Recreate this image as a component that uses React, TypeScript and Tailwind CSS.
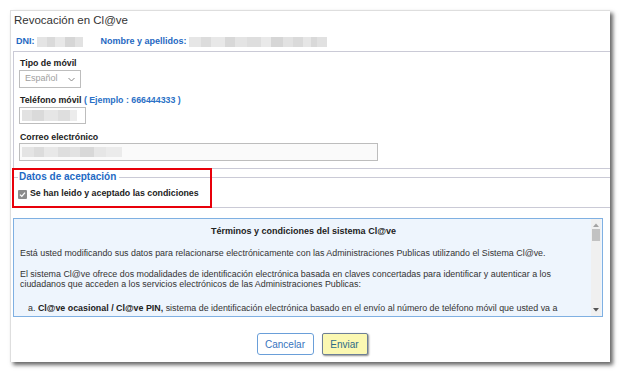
import React from "react";

const Blur = ({ widths }: { widths: [number, string][] }) => (
  <div className="flex h-full">
    {widths.map(([w, c], i) => (
      <div key={i} style={{ width: w, background: c }} className="h-full" />
    ))}
  </div>
);

export default function App() {
  return (
    <div className="w-[621px] h-[373px] bg-white pt-[10px] pl-[10px] font-['Liberation_Sans',Arial,sans-serif]">
      <div className="relative w-[600px] h-[352px] bg-white border-t border-l border-[#dedede] shadow-[3px_3px_4px_rgba(0,0,0,0.6)] flex flex-col">
        {/* Title */}
        <div className="h-[19px] leading-[19px] pl-[3px] text-[11.5px] text-[#333]">Revocación en Cl@ve</div>
        {/* DNI row */}
        <div className="h-[21px] pt-[3px] flex items-center pl-[5px] text-[9px] font-bold text-[#1f68c2]">
          <span>DNI:</span>
          <div className="ml-[2px] h-[10px] w-[46px]">
            <Blur widths={[[10, "#e4e4e4"], [8, "#dadada"], [10, "#e8e8e8"], [10, "#d6d6d6"], [8, "#e2e2e2"]]} />
          </div>
          <span className="ml-[18px]">Nombre y apellidos:</span>
          <div className="ml-[2px] h-[10px] w-[138px]">
            <Blur
              widths={[
                [12, "#e6e6e6"],
                [10, "#dcdcdc"],
                [14, "#e8e8e8"],
                [10, "#d8d8d8"],
                [12, "#e4e4e4"],
                [14, "#dedede"],
                [10, "#e9e9e9"],
                [12, "#d6d6d6"],
                [10, "#e2e2e2"],
                [10, "#dadada"],
                [8, "#e6e6e6"],
                [6, "#d9d9d9"],
                [10, "#e1e1e1"],
              ]}
            />
          </div>
        </div>
        {/* Fieldset 1 */}
        <div className="ml-[2px] h-[118px] border-l border-t border-b border-[#cacad6] pl-[5px] flex flex-col">
          <div className="mt-[5px] h-[12px] leading-[12px] text-[8.8px] font-bold text-[#222] pl-[1px]">Tipo de móvil</div>
          <div className="mt-[1px] h-[18px] w-[62px] border border-[#bdbdbd] bg-white flex items-center justify-between pl-[5px] pr-[5px]">
            <span className="text-[9px] text-[#a0a0a0]">Español</span>
            <svg width="7" height="5" viewBox="0 0 7 5">
              <polyline points="0.5,1 3.5,4 6.5,1" fill="none" stroke="#888" strokeWidth="1" />
            </svg>
          </div>
          <div className="mt-[6px] h-[12px] leading-[12px] text-[8.8px] font-bold text-[#222] pl-[1px]">
            Teléfono móvil <span className="text-[#2a70c6]">( Ejemplo : 666444333 )</span>
          </div>
          <div className="mt-[1px] h-[17px] w-[67px] border border-[#bdbdbd] bg-white p-[2px]">
            <Blur widths={[[10, "#e2e2e2"], [12, "#dadada"], [14, "#e6e6e6"], [12, "#dedede"], [7, "#ececec"]]} />
          </div>
          <div className="mt-[7px] h-[12px] leading-[12px] text-[8.8px] font-bold text-[#222] pl-[1px]">Correo electrónico</div>
          <div className="h-[18px] w-[359px] border border-[#bdbdbd] bg-[#fafafa] pl-[2px] py-[3px]">
            <div className="h-full w-[100px]">
              <Blur
                widths={[
                  [12, "#e4e4e4"],
                  [10, "#dcdcdc"],
                  [14, "#e8e8e8"],
                  [12, "#dedede"],
                  [10, "#e2e2e2"],
                  [14, "#d8d8d8"],
                  [12, "#e6e6e6"],
                  [16, "#ebebeb"],
                ]}
              />
            </div>
          </div>
        </div>
        {/* Fieldset 2 */}
        <div className="ml-[2px] mt-[2px] border-l border-b border-[#cacad6] pb-[7px]">
          <div className="h-[12px] flex items-center">
            <div className="w-[4px] h-px bg-[#cacad6]" />
            <span className="px-[1px] text-[10px] font-bold text-[#1f6ac4] leading-[12px]">Datos de aceptación</span>
            <div className="flex-1 h-px bg-[#cacad6] ml-[2px]" />
          </div>
          <div className="mt-[5px] h-[12px] flex items-center pl-[4px]">
            <div className="w-[9px] h-[9px] bg-[#8c8c8c] rounded-[1px] flex items-center justify-center">
              <svg width="7" height="7" viewBox="0 0 7 7">
                <polyline points="1,3.6 2.8,5.4 6,1.6" fill="none" stroke="#fff" strokeWidth="1.3" />
              </svg>
            </div>
            <span className="ml-[3px] text-[8.8px] font-bold text-[#222]">Se han leido y aceptado las condiciones</span>
          </div>
        </div>
        {/* Blue terms box */}
        <div className="ml-[2px] mt-[10px] h-[99px] w-[590px] border border-[#7fb0e2] bg-[#eef5fd] flex">
          <div className="flex-1 overflow-hidden pl-[6px] pr-[4px] text-[8.9px] leading-[10.5px] text-[#333]">
            <div className="pt-[7px] text-center font-bold text-[9px] text-[#222]">Términos y condiciones del sistema Cl@ve</div>
            <div className="mt-[11px] whitespace-nowrap">
              Está usted modificando sus datos para relacionarse electrónicamente con las Administraciones Publicas utilizando el Sistema Cl@ve.
            </div>
            <div className="mt-[10.5px] whitespace-nowrap">
              El sistema Cl@ve ofrece dos modalidades de identificación electrónica basada en claves concertadas para identificar y autenticar a los
              <br />
              ciudadanos que acceden a los servicios electrónicos de las Administraciones Publicas:
            </div>
            <div className="mt-[13px] pl-[8px] whitespace-nowrap">
              a. <b className="text-[#222]">Cl@ve ocasional / Cl@ve PIN,</b> sistema de identificación electrónica basado en el envío al número de teléfono móvil que usted va a
            </div>
          </div>
          <div className="w-[10px] bg-[#f0f0f0] flex flex-col items-center mr-[1px]">
            <svg width="6" height="4" viewBox="0 0 6 4" className="mt-[4px]">
              <polygon points="0,4 3,0.5 6,4" fill="#a3a3a3" />
            </svg>
            <div className="mt-[2px] w-[8px] h-[12px] bg-[#c2c2c2]" />
            <div className="flex-1" />
            <svg width="6" height="4" viewBox="0 0 6 4" className="mb-[4px]">
              <polygon points="0,0 3,3.5 6,0" fill="#555" />
            </svg>
          </div>
        </div>
        {/* Buttons */}
        <div className="mt-[16px] flex justify-center gap-[8px] pl-[3px]">
          <button className="h-[22px] w-[57px] border border-[#6a9fd9] rounded-[3px] bg-white text-[10px] text-[#3875be]">Cancelar</button>
          <button className="h-[22px] w-[46px] border border-[#6d7f96] rounded-[2px] bg-[#fbf8b2] text-[10px] text-[#2d6b88] shadow-[1px_1px_2px_rgba(0,0,0,0.45)]">Enviar</button>
        </div>
        {/* Red annotation box */}
        <div className="absolute left-[1px] top-[157px] w-[200px] h-[40px] border-2 border-[#e8000a]" />
      </div>
    </div>
  );
}
